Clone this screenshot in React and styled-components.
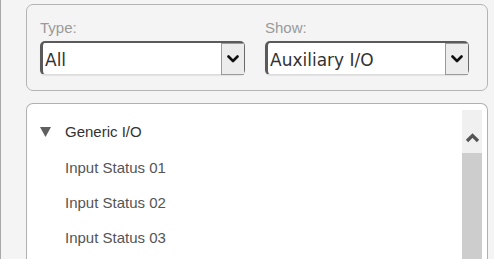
import React from "react";
import styled, { createGlobalStyle } from "styled-components";

const Global = createGlobalStyle`
  html, body { margin: 0; padding: 0; background: #f4f4f4; overflow: hidden; }
  body { font-family: "Liberation Sans", Arial, sans-serif; }
`;

const Page = styled.div`
  height: 259px;
  box-sizing: border-box;
  border-left: 1px solid #a8a8a8;
  padding: 4px 6px 0 25px;
  display: flex;
  flex-direction: column;
  gap: 12px;
`;

const FilterPanel = styled.div`
  border: 1px solid #b4b4b4;
  border-radius: 7px;
  background: #f4f4f4;
  padding: 14px 18px 15px 13px;
  display: grid;
  grid-template-columns: 205px 204px;
  column-gap: 20px;
`;

const Field = styled.div`
  display: flex;
  flex-direction: column;
  gap: 4px;
`;

const Label = styled.div`
  font-size: 15px;
  line-height: 18px;
  color: #9a9a9a;
`;

const SelectBox = styled.div`
  height: 34px;
  box-sizing: border-box;
  background: #fff;
  border-radius: 5px;
  border-top: 2px solid #5a5a5a;
  border-left: 3px solid #5a5a5a;
  border-right: 1px solid #6a6a6a;
  border-bottom: 1px solid #dcdcdc;
  box-shadow: 0 1px 1px #e2e2e2;
  display: flex;
  align-items: stretch;
`;

const SelectText = styled.div`
  flex: 1;
  padding-left: 2px;
  font-family: "DejaVu Sans", Verdana, sans-serif;
  font-size: 17px;
  color: #333;
  display: flex;
  align-items: center;
  padding-top: 2px;
`;

const ArrowButton = styled.div`
  width: 22px;
  margin: 0 0 -1px 0;
  background: #ececec;
  border: 1px solid #9a9a9a;
  border-right: none;
  display: flex;
  align-items: center;
  justify-content: center;
`;

const ListPanel = styled.div`
  flex: 1;
  border: 1px solid #b0b0b0;
  border-bottom: none;
  border-radius: 7px 7px 0 0;
  background: #fff;
  display: flex;
  padding: 6px 5px 0 0;
  overflow: hidden;
`;

const Tree = styled.div`
  flex: 1;
  padding-top: 3px;
  display: flex;
  flex-direction: column;
`;

const GroupRow = styled.div`
  height: 37px;
  display: flex;
  align-items: center;
  padding-left: 13px;
  font-size: 15px;
  color: #333;
`;

const Caret = styled.span`
  width: 25px;
  display: flex;
  align-items: center;
`;

const ItemRow = styled.div`
  height: 35px;
  flex-shrink: 0;
  display: flex;
  align-items: center;
  padding-left: 38px;
  font-size: 15px;
  color: #555;
`;

const Scrollbar = styled.div`
  width: 20px;
  display: flex;
  flex-direction: column;
`;

const ScrollUp = styled.div`
  height: 43px;
  background: #f0f0f0;
  display: flex;
  align-items: center;
  justify-content: center;
  padding-top: 12px;
  box-sizing: border-box;
`;

const Thumb = styled.div`
  flex: 1;
  background: #cdcdcd;
`;

const ChevronDown = () => (
  <svg width="12" height="8" viewBox="0 0 12 8">
    <path d="M1.5 1.5 L6 6 L10.5 1.5" fill="none" stroke="#111" strokeWidth="2.6" strokeLinecap="round" strokeLinejoin="round" />
  </svg>
);

const ChevronUp = () => (
  <svg width="15" height="10" viewBox="0 0 15 10">
    <path d="M2 8 L7.5 2.5 L13 8" fill="none" stroke="#555" strokeWidth="3.2" strokeLinejoin="miter" />
  </svg>
);

const Triangle = () => (
  <svg width="11" height="10" viewBox="0 0 11 10">
    <path d="M0 0 H11 L5.5 10 Z" fill="#5f5f5f" />
  </svg>
);

const Select = ({ value }) => (
  <SelectBox>
    <SelectText>{value}</SelectText>
    <ArrowButton>
      <ChevronDown />
    </ArrowButton>
  </SelectBox>
);

export default function App() {
  const items = ["Input Status 01", "Input Status 02", "Input Status 03"];
  return (
    <>
      <Global />
      <Page>
        <FilterPanel>
          <Field>
            <Label>Type:</Label>
            <Select value="All" />
          </Field>
          <Field>
            <Label>Show:</Label>
            <Select value="Auxiliary I/O" />
          </Field>
        </FilterPanel>
        <ListPanel>
          <Tree>
            <GroupRow>
              <Caret>
                <Triangle />
              </Caret>
              Generic I/O
            </GroupRow>
            {items.map((t) => (
              <ItemRow key={t}>{t}</ItemRow>
            ))}
          </Tree>
          <Scrollbar>
            <ScrollUp>
              <ChevronUp />
            </ScrollUp>
            <Thumb />
          </Scrollbar>
        </ListPanel>
      </Page>
    </>
  );
}
